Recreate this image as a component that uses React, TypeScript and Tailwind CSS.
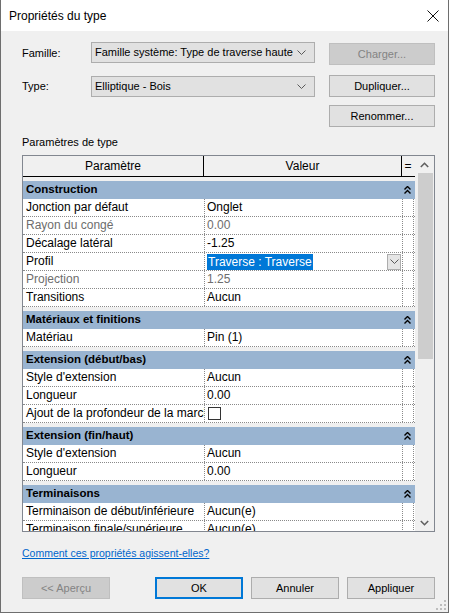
import React from "react";

type Row =
  | { kind: "cat"; label: string }
  | { kind: "row"; label: string; value?: string; dim?: boolean; select?: boolean; check?: boolean };

const rows: Row[] = [
  { kind: "cat", label: "Construction" },
  { kind: "row", label: "Jonction par défaut", value: "Onglet" },
  { kind: "row", label: "Rayon du congé", value: "0.00", dim: true },
  { kind: "row", label: "Décalage latéral", value: "-1.25" },
  { kind: "row", label: "Profil", value: "Traverse : Traverse", select: true },
  { kind: "row", label: "Projection", value: "1.25", dim: true },
  { kind: "row", label: "Transitions", value: "Aucun" },
  { kind: "cat", label: "Matériaux et finitions" },
  { kind: "row", label: "Matériau", value: "Pin (1)" },
  { kind: "cat", label: "Extension (début/bas)" },
  { kind: "row", label: "Style d'extension", value: "Aucun" },
  { kind: "row", label: "Longueur", value: "0.00" },
  { kind: "row", label: "Ajout de la profondeur de la marche", check: true },
  { kind: "cat", label: "Extension (fin/haut)" },
  { kind: "row", label: "Style d'extension", value: "Aucun" },
  { kind: "row", label: "Longueur", value: "0.00" },
  { kind: "cat", label: "Terminaisons" },
  { kind: "row", label: "Terminaison de début/inférieure", value: "Aucun(e)" },
  { kind: "row", label: "Terminaison finale/supérieure", value: "Aucun(e)" }
];

const font = { fontFamily: '"Segoe UI", "Liberation Sans", Arial, sans-serif' };

function Chevron() {
  return (
    <svg width="9" height="5" viewBox="0 0 9 5">
      <path d="M0.5 0.5 L4.5 4.5 L8.5 0.5" fill="none" stroke="#5a5a5a" strokeWidth="1" />
    </svg>
  );
}

function DoubleUp() {
  return (
    <svg width="7" height="8" viewBox="0 0 7 8">
      <path d="M0.5 3.5 L3.5 0.5 L6.5 3.5 M0.5 7.5 L3.5 4.5 L6.5 7.5" fill="none" stroke="#000" strokeWidth="1.4" />
    </svg>
  );
}

function Combo({ text }: { text: string }) {
  return (
    <div className="flex h-[21px] w-[224px] items-center justify-between border border-[#adadad] bg-[#e1e1e1] pl-[3px] pr-[8px] text-[11px] text-black">
      <span className="whitespace-nowrap">{text}</span>
      <Chevron />
    </div>
  );
}

function Button({ label, disabled, primary, className = "" }: { label: string; disabled?: boolean; primary?: boolean; className?: string }) {
  return (
    <div
      className={
        "flex h-[22px] items-center justify-center text-[11px] " +
        (disabled
          ? "border border-[#bfbfbf] bg-[#cccccc] text-[#838383] "
          : primary
            ? "border-2 border-[#0078d7] bg-[#e1e1e1] text-black "
            : "border border-[#adadad] bg-[#e1e1e1] text-black ") +
        className
      }
    >
      {label}
    </div>
  );
}

export default function App() {
  return (
    <div style={font} className="flex h-[613px] w-[449px] flex-col border-x border-b border-[#6e6e6e] bg-[#f0f0f0] text-[11px] text-black">
      <div className="flex h-[31px] shrink-0 items-center justify-between bg-white pl-[8px] pr-[9px]">
        <span className="text-[12px]">Propriétés du type</span>
        <svg width="12" height="12" viewBox="0 0 12 12">
          <path d="M0.5 0.5 L11.5 11.5 M11.5 0.5 L0.5 11.5" stroke="#111" strokeWidth="1" />
        </svg>
      </div>

      <div className="flex flex-col pl-[21px] pr-[13px]">
        <div className="mt-[11px] flex items-start">
          <span className="w-[69px] pt-[3px]">Famille:</span>
          <Combo text="Famille système: Type de traverse haute" />
          <Button label="Charger..." disabled className="ml-[14px] mt-px w-[106px]" />
        </div>
        <div className="mt-[11px] flex items-start">
          <span className="w-[69px] pt-[2px]">Type:</span>
          <Combo text="Elliptique - Bois" />
          <Button label="Dupliquer..." className="ml-[14px] -mt-px w-[106px]" />
        </div>
        <div className="mt-[8px] flex justify-end">
          <Button label="Renommer..." className="w-[106px]" />
        </div>
        <div className="mt-[6px] h-[22px] leading-[18px]">Paramètres de type</div>

        <div className="flex h-[377px] w-[413px] border border-[#828790] bg-[#f0f0f0] text-[12px]">
          <div className="flex w-[392px] flex-col overflow-hidden bg-[#f0f0f0]">
            <div className="flex h-[21px] shrink-0 border-b border-black bg-[#f0f0f0]">
              <div className="flex w-[181px] items-center justify-center border-r border-black">Paramètre</div>
              <div className="flex w-[198px] items-center justify-center border-r border-black">Valeur</div>
              <div className="flex w-[12px] items-center justify-center">=</div>
            </div>
            {rows.map((r, i) =>
              r.kind === "cat" ? (
                <div key={i} className="mt-[4px] flex h-[18px] shrink-0 items-center justify-between bg-[#99b4d1] pl-[3px] pr-[4px] text-[11.5px] font-bold">
                  <span className="whitespace-nowrap">{r.label}</span>
                  <DoubleUp />
                </div>
              ) : (
                <div key={i} className="flex h-[18px] shrink-0 border-b border-dotted border-[#8a8a8a] bg-white">
                  <div className={"w-[181px] overflow-hidden whitespace-nowrap pl-[3px] leading-[17px] " + (r.dim ? "text-[#6d6d6d]" : "")}>
                    {r.label}
                  </div>
                  <div className={"flex w-[198px] items-center border-l border-dotted border-[#8a8a8a] pl-[2px] " + (r.dim ? "text-[#6d6d6d]" : "")}>
                    {r.select ? (
                      <div className="flex w-full items-center justify-between pr-[1px]">
                        <span className="bg-[#0078d7] px-px leading-[16px] text-white">{r.value}</span>
                        <div className="flex h-[16px] w-[14px] items-center justify-center border border-[#adadad] bg-[#e5e5e5]">
                          <Chevron />
                        </div>
                      </div>
                    ) : r.check ? (
                      <div className="ml-px h-[13px] w-[13px] border border-[#333] bg-white" />
                    ) : (
                      <span className="whitespace-nowrap leading-[17px]">{r.value}</span>
                    )}
                  </div>
                  <div className="w-[12px] border-x border-dotted border-[#8a8a8a]" />
                </div>
              )
            )}
          </div>
          <div className="flex w-[19px] flex-col items-center bg-[#f0f0f0]">
            <div className="flex h-[17px] w-full items-center justify-center">
              <svg width="9" height="6" viewBox="0 0 9 6">
                <path d="M0.8 5 L4.5 1.3 L8.2 5" fill="none" stroke="#606060" strokeWidth="1.6" />
              </svg>
            </div>
            <div className="ml-px h-[186px] w-[15px] bg-[#cdcdcd]" />
            <div className="flex-1" />
            <div className="flex h-[17px] w-full items-center justify-center">
              <svg width="9" height="6" viewBox="0 0 9 6">
                <path d="M0.8 1 L4.5 4.7 L8.2 1" fill="none" stroke="#606060" strokeWidth="1.6" />
              </svg>
            </div>
          </div>
        </div>

        <div className="mt-[13px] h-[16px] text-[10.5px] leading-[16px] text-[#0066cc] underline">Comment ces propriétés agissent-elles?</div>

        <div className="mt-[16px] flex items-center">
          <Button label="<< Aperçu" disabled className="w-[88px]" />
          <Button label="OK" primary className="ml-[45px] w-[88px]" />
          <Button label="Annuler" className="ml-[8px] w-[88px]" />
          <Button label="Appliquer" className="ml-[8px] w-[88px]" />
        </div>
      </div>
      <div className="flex-1" />
      <div className="flex justify-end pb-[2px] pr-[2px]">
        <svg width="10" height="10" viewBox="0 0 10 10">
          {[
            [8, 0],
            [8, 4],
            [4, 4],
            [8, 8],
            [4, 8],
            [0, 8]
          ].map(([x, y], i) => (
            <rect key={i} x={x} y={y} width="2" height="2" fill="#bdbdbd" />
          ))}
        </svg>
      </div>
    </div>
  );
}
